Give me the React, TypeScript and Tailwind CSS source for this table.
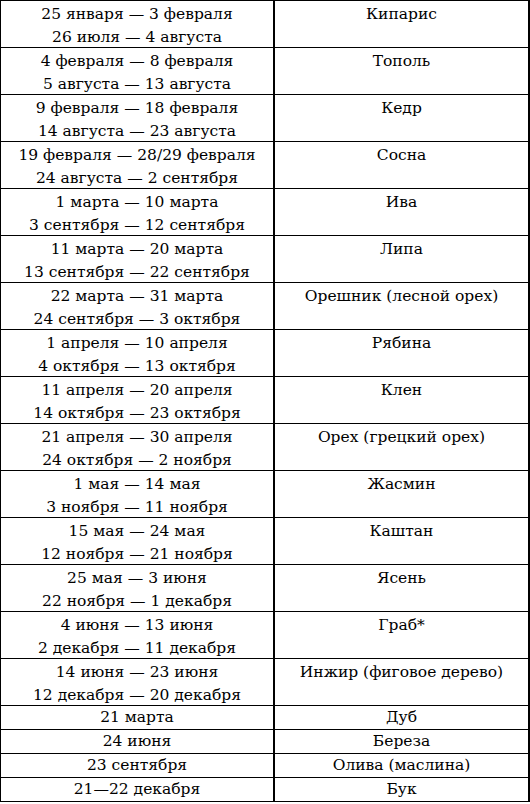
const rows: [string[], string][] = [
  [["25 января — 3 февраля", "26 июля — 4 августа"], "Кипарис"],
  [["4 февраля — 8 февраля", "5 августа — 13 августа"], "Тополь"],
  [["9 февраля — 18 февраля", "14 августа — 23 августа"], "Кедр"],
  [["19 февраля — 28/29 февраля", "24 августа — 2 сентября"], "Сосна"],
  [["1 марта — 10 марта", "3 сентября — 12 сентября"], "Ива"],
  [["11 марта — 20 марта", "13 сентября — 22 сентября"], "Липа"],
  [["22 марта — 31 марта", "24 сентября — 3 октября"], "Орешник (лесной орех)"],
  [["1 апреля — 10 апреля", "4 октября — 13 октября"], "Рябина"],
  [["11 апреля — 20 апреля", "14 октября — 23 октября"], "Клен"],
  [["21 апреля — 30 апреля", "24 октября — 2 ноября"], "Орех (грецкий орех)"],
  [["1 мая — 14 мая", "3 ноября — 11 ноября"], "Жасмин"],
  [["15 мая — 24 мая", "12 ноября — 21 ноября"], "Каштан"],
  [["25 мая — 3 июня", "22 ноября — 1 декабря"], "Ясень"],
  [["4 июня — 13 июня", "2 декабря — 11 декабря"], "Граб*"],
  [["14 июня — 23 июня", "12 декабря — 20 декабря"], "Инжир (фиговое дерево)"],
  [["21 марта"], "Дуб"],
  [["24 июня"], "Береза"],
  [["23 сентября"], "Олива (маслина)"],
  [["21—22 декабря"], "Бук"],
];

export default function App() {
  return (
    <div className="w-[530px] bg-white text-black font-['DejaVu_Serif',serif] text-[15.5px]">
      <div className="border-t border-l border-r-2 border-black">
        {rows.map(([dates, tree], i) => {
          const single = dates.length === 1;
          return (
            <div
              key={i}
              className={`flex border-b border-black leading-[23px] ${single ? "h-[24px]" : "h-[47px]"}`}
            >
              <div className={`w-[274px] shrink-0 border-r-2 border-black text-center ${single ? "" : "pt-[2px]"}`}>
                {dates.map((d) => (
                  <div key={d}>{d}</div>
                ))}
              </div>
              <div className={`flex-1 text-center ${single ? "" : "pt-[2px]"}`}>{tree}</div>
            </div>
          );
        })}
      </div>
    </div>
  );
}
